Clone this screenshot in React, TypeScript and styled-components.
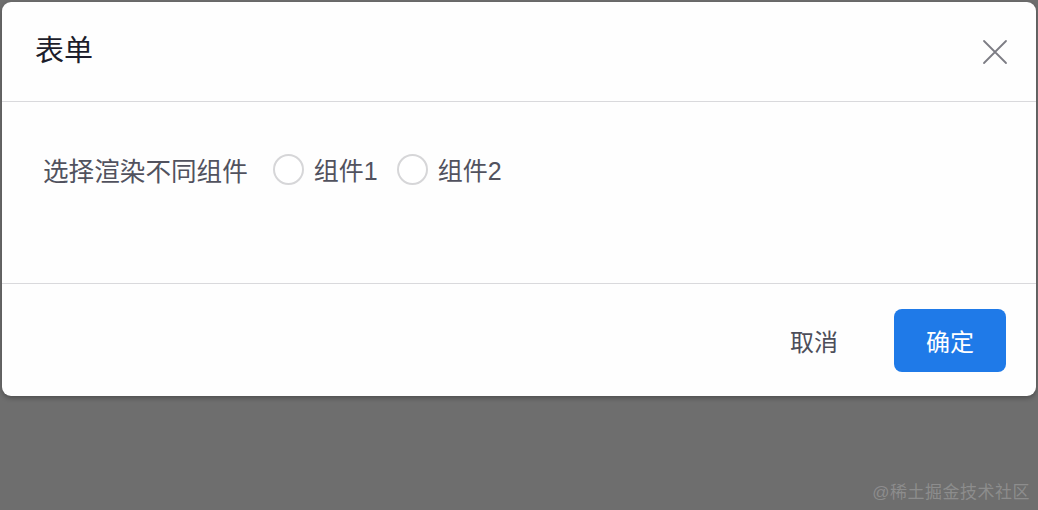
import * as React from "react";
import styled, { createGlobalStyle } from "styled-components";

const GlobalStyle = createGlobalStyle`
  html, body {
    margin: 0;
    padding: 0;
    background: #6e6e6e;
  }
  * {
    box-sizing: border-box;
  }
`;

const FONT = `"Liberation Sans", "Noto Sans CJK SC", sans-serif`;

const options = [
  { value: "a", label: "组件1" },
  { value: "b", label: "组件2" },
];

function Radio({ label, checked, onSelect }: { label: string; checked: boolean; onSelect: () => void }) {
  return (
    <RadioItem onClick={onSelect}>
      <RadioCircle $checked={checked} />
      <RadioText>{label}</RadioText>
    </RadioItem>
  );
}

export default function App() {
  const [value, setValue] = React.useState<string | null>(null);

  return (
    <>
      <GlobalStyle />
      <Backdrop>
        <Dialog>
          <Header>
            <Title>表单</Title>
            <CloseButton aria-label="关闭">
              <svg width="26" height="26" viewBox="0 0 26 26" fill="none">
                <path d="M2 2L24 24M24 2L2 24" stroke="#7c7c84" strokeWidth="1.8" strokeLinecap="round" />
              </svg>
            </CloseButton>
          </Header>
          <Body>
            <FormRow>
              <Label>选择渲染不同组件</Label>
              <RadioGroup>
                {options.map((o) => (
                  <Radio
                    key={o.value}
                    label={o.label}
                    checked={value === o.value}
                    onSelect={() => setValue(o.value)}
                  />
                ))}
              </RadioGroup>
            </FormRow>
          </Body>
          <Footer>
            <TextButton>取消</TextButton>
            <PrimaryButton>确定</PrimaryButton>
          </Footer>
        </Dialog>
        <Watermark>@稀土掘金技术社区</Watermark>
      </Backdrop>
    </>
  );
}

const Backdrop = styled.div`
  position: relative;
  width: 1038px;
  height: 510px;
  padding: 2px 2px 0 2px;
  background: #6e6e6e;
  font-family: ${FONT};
  overflow: hidden;
`;

const Dialog = styled.div`
  width: 1034px;
  height: 394px;
  background: #fefefe;
  border-radius: 9px;
  box-shadow: 0 2px 5px rgba(0, 0, 0, 0.3);
  display: flex;
  flex-direction: column;
`;

const Header = styled.div`
  height: 100px;
  flex-shrink: 0;
  display: flex;
  align-items: center;
  justify-content: space-between;
  padding: 0 28px 0 33px;
  border-bottom: 1px solid #d9d9dc;
`;

const Title = styled.div`
  font-size: 29px;
  line-height: 1;
  color: #1c1d2b;
  font-weight: 400;
`;

const CloseButton = styled.button`
  border: none;
  background: none;
  padding: 0;
  width: 26px;
  height: 26px;
  display: flex;
  cursor: pointer;
`;

const Body = styled.div`
  height: 182px;
  flex-shrink: 0;
  padding: 47px 0 0 41px;
  border-bottom: 1px solid #d9d9dc;
`;

const FormRow = styled.div`
  display: flex;
  align-items: center;
  height: 40px;
`;

const Label = styled.div`
  font-size: 25.6px;
  color: #51525e;
  margin-right: 25px;
  white-space: nowrap;
`;

const RadioGroup = styled.div`
  display: flex;
  align-items: center;
  gap: 19px;
`;

const RadioItem = styled.label`
  display: flex;
  align-items: center;
  gap: 10px;
  cursor: pointer;
`;

const RadioCircle = styled.span<{ $checked: boolean }>`
  width: 31px;
  height: 31px;
  border-radius: 50%;
  border: 2px solid ${(p) => (p.$checked ? "#1f7be8" : "#d6d6d8")};
  background: #fff;
  box-shadow: ${(p) => (p.$checked ? "inset 0 0 0 8px #1f7be8" : "none")};
`;

const RadioText = styled.span`
  font-size: 25px;
  color: #51525e;
`;

const Footer = styled.div`
  flex: 1;
  display: flex;
  align-items: center;
  justify-content: flex-end;
  padding: 0 30px 0 0;
  gap: 44px;
`;

const TextButton = styled.button`
  border: none;
  background: none;
  font-family: ${FONT};
  font-size: 24px;
  color: #4d4e5a;
  padding: 0 12px;
  height: 63px;
  cursor: pointer;
`;

const PrimaryButton = styled.button`
  width: 112px;
  height: 63px;
  border: none;
  border-radius: 8px;
  background: #1f7ae8;
  color: #fff;
  font-family: ${FONT};
  font-size: 24px;
  cursor: pointer;
`;

const Watermark = styled.div`
  position: absolute;
  right: 8px;
  bottom: 7px;
  font-size: 17px;
  color: rgba(255, 255, 255, 0.22);
  letter-spacing: 0.5px;
`;
